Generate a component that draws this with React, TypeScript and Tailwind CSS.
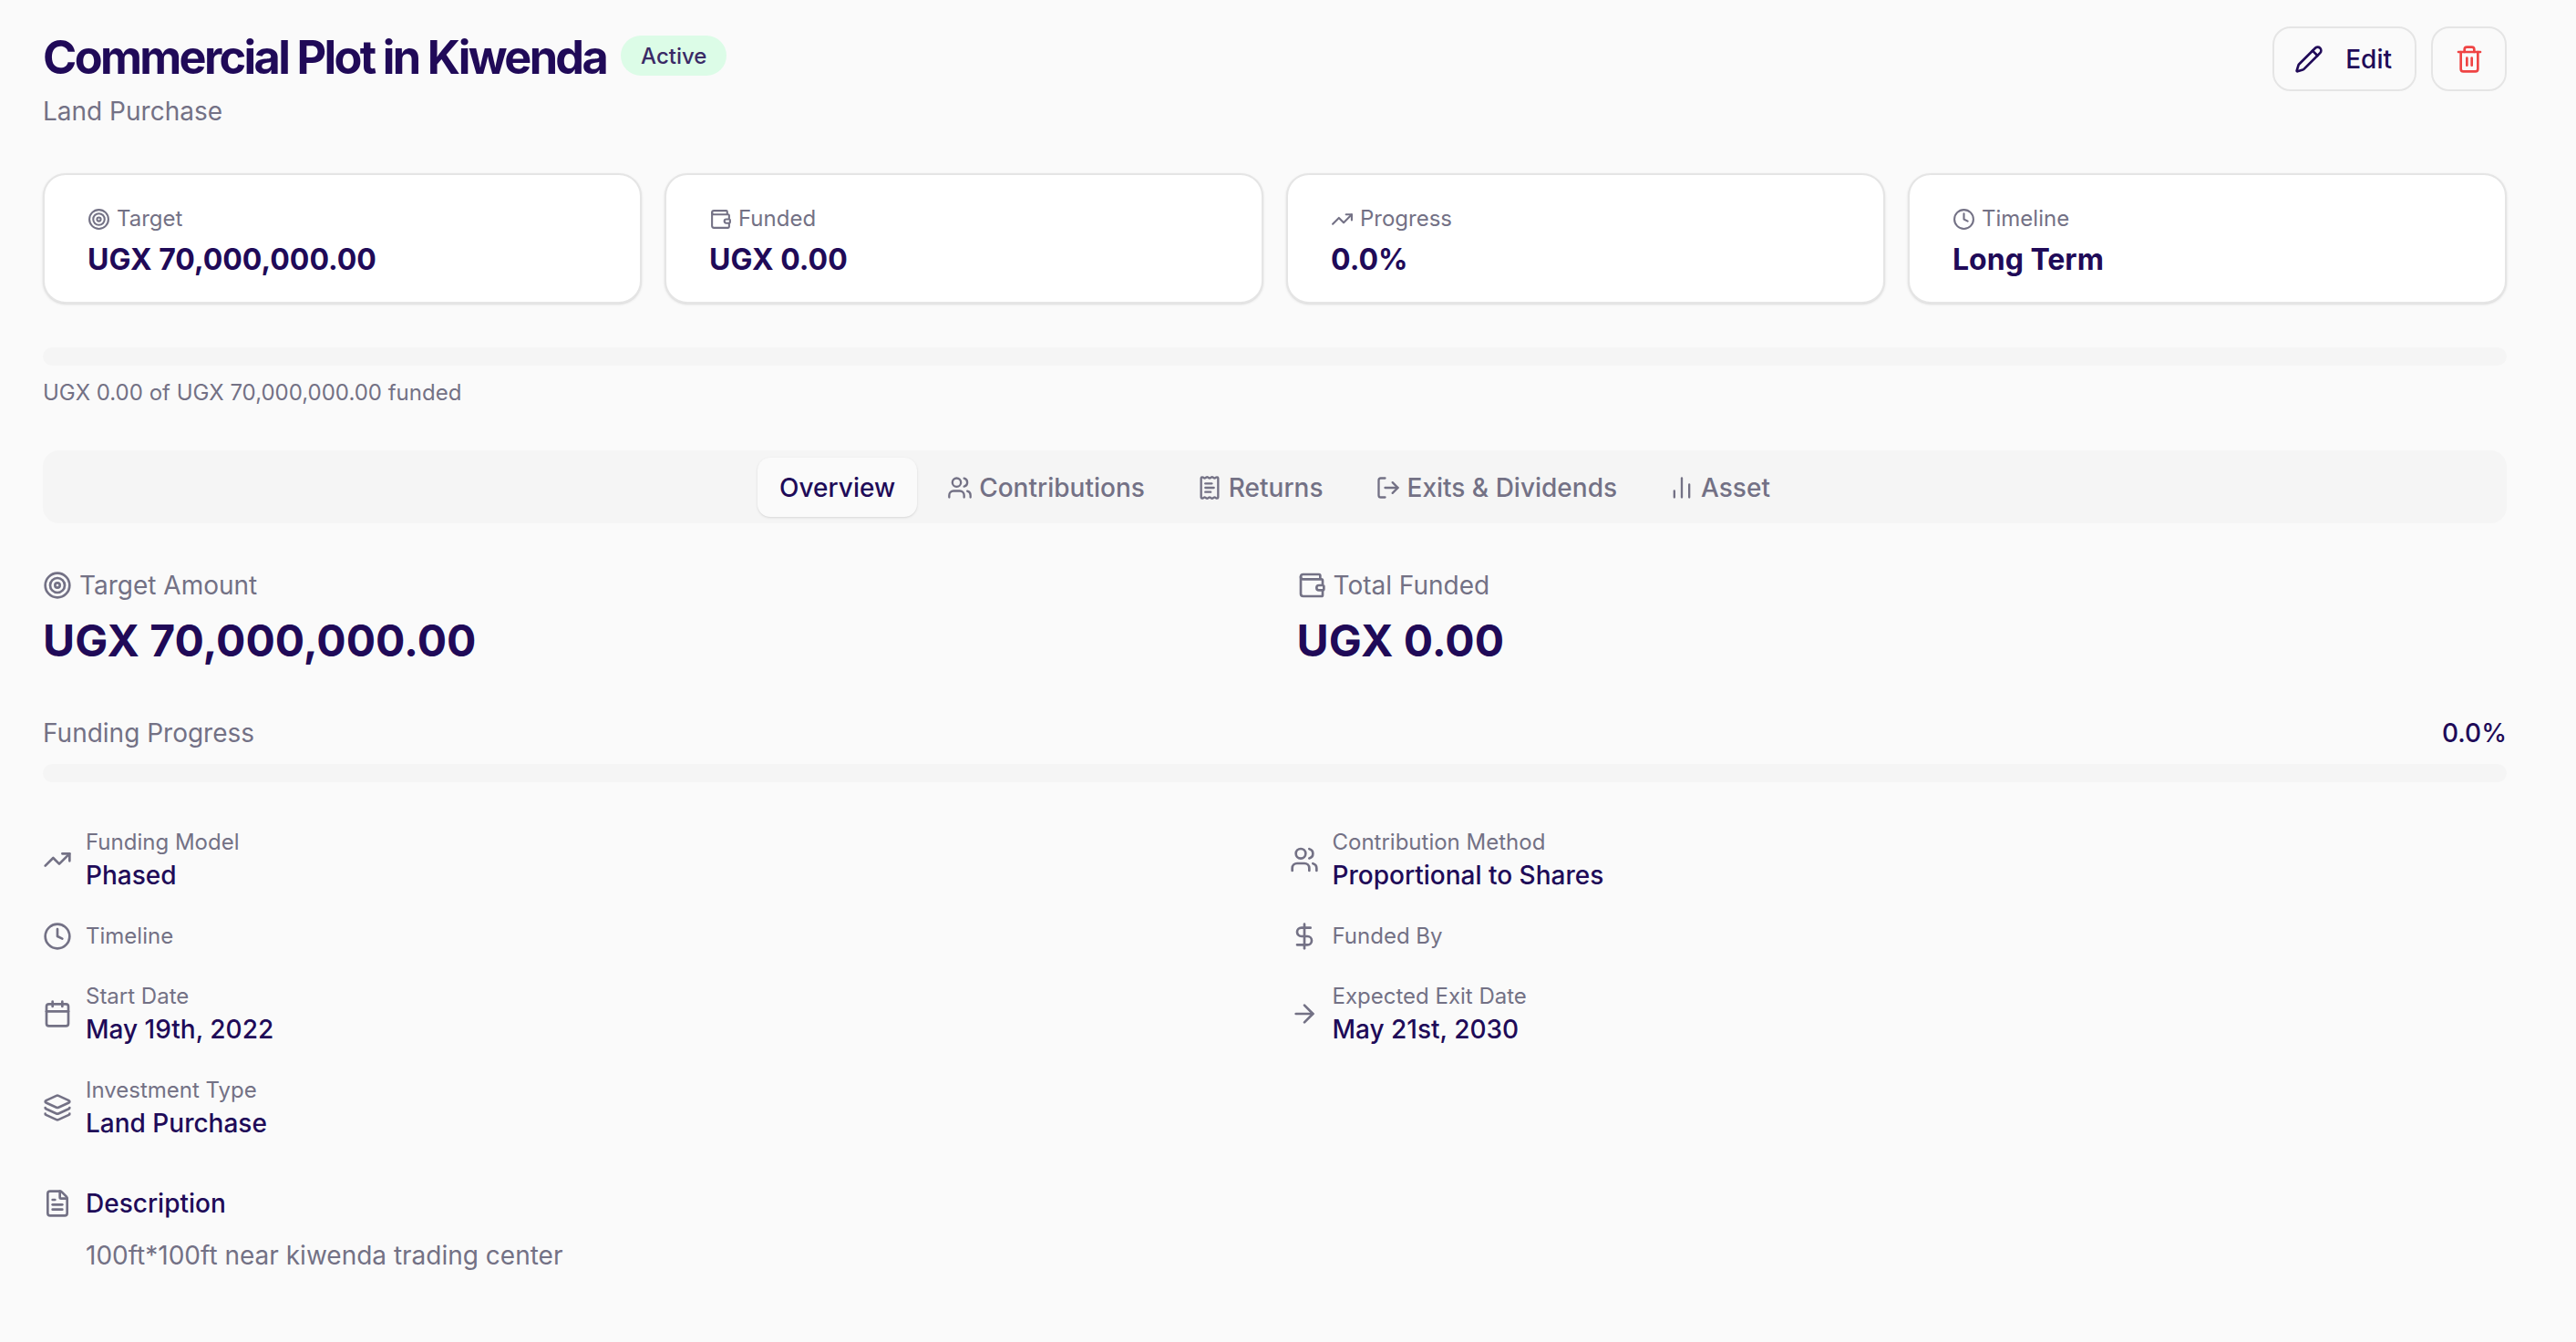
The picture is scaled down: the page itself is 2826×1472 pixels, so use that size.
import { Target, Wallet, TrendingUp, Clock, Users, ReceiptText, LogOut, ChartNoAxesColumn, Pencil, Trash2, DollarSign, ArrowRight, Calendar, Layers, FileText } from 'lucide-react'
import type { ReactNode } from 'react'

const stats = [
  { icon: <Target className="w-[25px] h-[25px]" />, label: 'Target', value: 'UGX 70,000,000.00' },
  { icon: <Wallet className="w-[25px] h-[25px]" />, label: 'Funded', value: 'UGX 0.00' },
  { icon: <TrendingUp className="w-[25px] h-[25px]" />, label: 'Progress', value: '0.0%' },
  { icon: <Clock className="w-[25px] h-[25px]" />, label: 'Timeline', value: 'Long Term' },
]

const tabs = [
  { icon: <Users className="w-[28px] h-[28px]" />, label: 'Contributions' },
  { icon: <ReceiptText className="w-[28px] h-[28px]" />, label: 'Returns' },
  { icon: <LogOut className="w-[28px] h-[28px]" />, label: 'Exits & Dividends' },
  { icon: <ChartNoAxesColumn className="w-[28px] h-[28px]" />, label: 'Asset' },
]

function Detail({ icon, label, value }: { icon: ReactNode; label: string; value?: string }) {
  return (
    <div className="flex items-center gap-[15px]">
      <span className="text-[#737185] shrink-0">{icon}</span>
      <div>
        <p className="text-[24px] leading-[36px] text-[#737185]">{label}</p>
        {value && <p className="text-[28px] leading-[37px] font-medium text-[#200a58]">{value}</p>}
      </div>
    </div>
  )
}

export default function App() {
  const iconSize = 'w-[32px] h-[32px] block'
  return (
    <div className="min-h-screen bg-[#fafafa] pl-[47px] pr-[76px] pt-[29px] font-['Inter',sans-serif] text-[#200a58] antialiased">
      <div className="flex justify-between items-start">
        <div>
          <div className="flex items-center gap-[16px] h-[68px]">
            <h1 className="text-[50.4px] font-bold tracking-[-2.65px] leading-[68px]">Commercial Plot in Kiwenda</h1>
            <span className="flex items-center h-[44px] px-[22px] pt-[1px] rounded-full bg-[#dcfce7] text-[#3a2a66] text-[24px] font-medium -mt-[4px]">Active</span>
          </div>
          <p className="mt-[7px] text-[28px] leading-[36px] text-[#737185]">Land Purchase</p>
        </div>
        <div className="flex gap-[16px]">
          <button className="flex items-center gap-[24px] h-[71px] pl-[22px] pr-[25px] pt-[1px] border-2 border-[#e5e5e5] rounded-[20px] text-[28px] font-medium">
            <Pencil className={iconSize} />
            Edit
          </button>
          <button className="flex items-center justify-center w-[83px] h-[71px] border-2 border-[#e5e5e5] rounded-[20px] text-[#ef4444]">
            <Trash2 className={iconSize} />
          </button>
        </div>
      </div>

      <div className="mt-[50px] grid grid-cols-4 gap-[25px]">
        {stats.map(s => (
          <div key={s.label} className="h-[143px] pl-[47px] pt-[30px] bg-white border-2 border-[#e5e5e5] rounded-[25px] shadow-sm">
            <div className="flex items-center gap-[7px] text-[24px] leading-[36px] text-[#737185]">
              {s.icon}
              {s.label}
            </div>
            <p className="mt-[4px] text-[32px] leading-[46px] font-bold">{s.value}</p>
          </div>
        ))}
      </div>

      <div className="mt-[48px] h-[20px] rounded-full bg-[#f5f5f5]" />
      <p className="mt-[12px] text-[24px] leading-[36px] text-[#737185]">UGX 0.00 of UGX 70,000,000.00 funded</p>

      <div className="mt-[45px] h-[80px] flex items-center justify-center gap-[9px] rounded-[18px] bg-[#f5f5f5]">
        <button className="h-[65px] px-[24px] pt-[2px] rounded-[14px] bg-[#fafafa] shadow-sm text-[28px] font-medium">Overview</button>
        {tabs.map(t => (
          <button key={t.label} className="h-[65px] px-[24px] pt-[2px] flex items-center gap-[7px] text-[28px] font-medium text-[#737185]">
            {t.icon}
            {t.label}
          </button>
        ))}
      </div>

      <div className="mt-[50px] grid grid-cols-2 gap-x-[48px]">
        <div>
          <div className="flex items-center gap-[8px] text-[28px] leading-[36px] text-[#737185]">
            <Target className={iconSize} />
            Target Amount
          </div>
          <p className="mt-[13px] text-[48px] leading-[60px] font-bold">UGX 70,000,000.00</p>
        </div>
        <div>
          <div className="flex items-center gap-[8px] text-[28px] leading-[36px] text-[#737185]">
            <Wallet className={iconSize} />
            Total Funded
          </div>
          <p className="mt-[13px] text-[48px] leading-[60px] font-bold">UGX 0.00</p>
        </div>
      </div>

      <div className="mt-[53px] flex justify-between text-[28px] leading-[36px]">
        <span className="text-[#737185]">Funding Progress</span>
        <span className="font-medium">0.0%</span>
      </div>
      <div className="mt-[16px] h-[20px] rounded-full bg-[#f5f5f5]" />

      <div className="mt-[48px] grid grid-cols-2 gap-x-[32px] gap-y-[30px] items-start">
        <Detail icon={<TrendingUp className={iconSize} />} label="Funding Model" value="Phased" />
        <Detail icon={<Users className={iconSize} />} label="Contribution Method" value="Proportional to Shares" />
        <Detail icon={<Clock className={iconSize} />} label="Timeline" />
        <Detail icon={<DollarSign className={iconSize} />} label="Funded By" />
        <Detail icon={<Calendar className={iconSize} />} label="Start Date" value="May 19th, 2022" />
        <Detail icon={<ArrowRight className={iconSize} />} label="Expected Exit Date" value="May 21st, 2030" />
        <Detail icon={<Layers className={iconSize} />} label="Investment Type" value="Land Purchase" />
      </div>

      <div className="mt-[51px] flex items-center gap-[15px]">
        <FileText className={`${iconSize} text-[#737185]`} />
        <h3 className="text-[28px] leading-[36px] font-medium">Description</h3>
      </div>
      <p className="mt-[21px] ml-[47px] text-[28px] leading-[36px] text-[#737185]">100ft*100ft near kiwenda trading center</p>
    </div>
  )
}
